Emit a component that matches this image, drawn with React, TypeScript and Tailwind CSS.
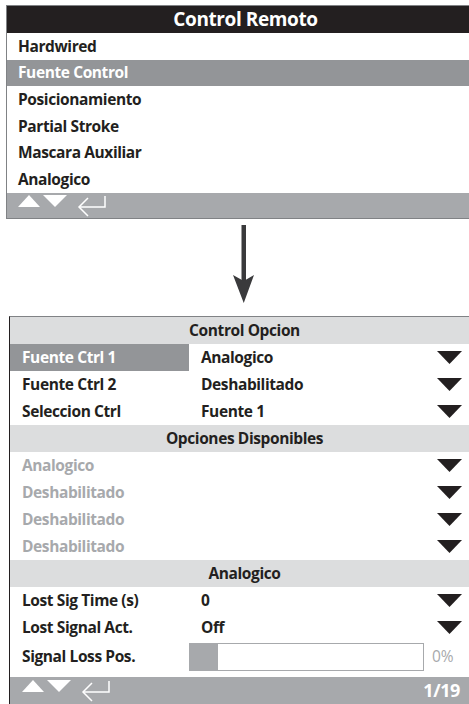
const font = { fontFamily: '"Open Sans", "Noto Sans", Arial, sans-serif' };

function NavIcons() {
  return (
    <svg width="92" height="25" viewBox="0 0 92 25" className="shrink-0">
      <polygon points="0,14 11,2 22,14" fill="#fff" />
      <polygon points="25,2 49,2 37,14" fill="#fff" />
      <g stroke="#fff" strokeWidth="1.5" fill="none">
        <polyline points="87,3 87,14 61,14" />
        <polyline points="70,5 61,14 70,23" />
      </g>
    </svg>
  );
}

function DropArrow() {
  return (
    <svg width="25" height="13" viewBox="0 0 25 13" className="shrink-0">
      <polygon points="0,0 25,0 12.5,13" fill="#231f20" />
    </svg>
  );
}

type Row = { label: string; value?: string; active?: boolean; disabled?: boolean };

function OptionRow({ label, value, active, disabled }: Row) {
  return (
    <div className="flex h-[27px] items-center">
      <div
        className={
          "flex h-full w-[179px] shrink-0 items-center pl-[12px] " +
          (active ? "bg-[#939598] text-white" : disabled ? "text-[#a7a9ac]" : "text-[#231f20]")
        }
      >
        {label}
      </div>
      <div className="flex-1 pl-[12px] text-[#231f20]">{value}</div>
      <div className="pr-[17px]">
        <DropArrow />
      </div>
    </div>
  );
}

function SectionHeader({ title }: { title: string }) {
  return (
    <div className="flex h-[27px] items-center justify-center bg-[#dcddde] text-[#231f20]">{title}</div>
  );
}

export default function App() {
  const menu = ["Hardwired", "Fuente Control", "Posicionamiento", "Partial Stroke", "Mascara Auxiliar", "Analogico"];

  return (
    <div
      className="relative h-[704px] w-[469px] overflow-hidden bg-white pt-[5px] text-[15.5px] font-bold tracking-[-0.4px]"
      style={font}
    >
      <div className="ml-[6px] w-[478px] border border-r-0 border-[#808285]">
        <div className="flex h-[27px] items-center justify-center bg-[#231f20] text-[19px] text-white">
          Control Remoto
        </div>
        {menu.map((m, i) => (
          <div
            key={m}
            className={
              "flex h-[26.67px] items-center pl-[11px] " +
              (i === 1 ? "bg-[#939598] text-white" : "text-[#231f20]")
            }
          >
            {m}
          </div>
        ))}
        <div className="flex h-[25px] items-center bg-[#a7a9ac] pl-[11px]">
          <NavIcons />
        </div>
      </div>

      <div className="ml-[233px] mt-[6px]">
        <svg width="21" height="78" viewBox="0 0 21 78">
          <rect x="8.5" y="0" width="4.5" height="58" fill="#3a3a3c" />
          <polygon points="0,50 10.75,78 21,50 10.75,56" fill="#3a3a3c" />
        </svg>
      </div>

      <div className="ml-[9px] mt-[13px] w-[470px] border-l border-t border-l-[#231f20] border-t-[#808285]">
        <SectionHeader title="Control Opcion" />
        <OptionRow label="Fuente Ctrl 1" value="Analogico" active />
        <OptionRow label="Fuente Ctrl 2" value="Deshabilitado" />
        <OptionRow label="Seleccion Ctrl" value="Fuente 1" />
        <SectionHeader title="Opciones Disponibles" />
        <OptionRow label="Analogico" disabled />
        <OptionRow label="Deshabilitado" disabled />
        <OptionRow label="Deshabilitado" disabled />
        <OptionRow label="Deshabilitado" disabled />
        <SectionHeader title="Analogico" />
        <OptionRow label="Lost Sig Time (s)" value="0" />
        <OptionRow label="Lost Signal Act." value="Off" />
        <div className="flex h-[36px] items-start pt-[2px]">
          <div className="flex h-[28px] w-[179px] shrink-0 items-center pl-[12px] text-[#231f20]">
            Signal Loss Pos.
          </div>
          <div className="flex h-[28px] w-[235px] border border-[#a7a9ac]">
            <div className="h-full w-[28px] bg-[#a7a9ac]" />
          </div>
          <div className="flex h-[28px] items-center pl-[8px] font-normal tracking-normal text-[#a7a9ac]">0%</div>
        </div>
        <div className="flex h-[27px] items-center justify-between bg-[#a7a9ac] pl-[12px] pr-[19px]">
          <NavIcons />
          <span className="text-[18px] text-white">1/19</span>
        </div>
      </div>
    </div>
  );
}
